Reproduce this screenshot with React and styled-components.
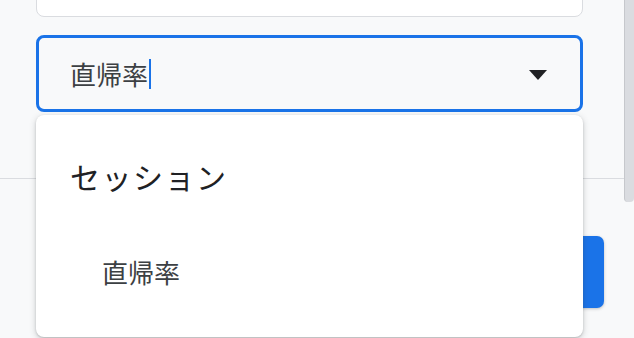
import React from "react";
import styled, { createGlobalStyle } from "styled-components";

const Global = createGlobalStyle`
  html, body { margin: 0; padding: 0; }
  body {
    background: #f8f9fa;
    font-family: "Noto Sans CJK JP", "Noto Sans", sans-serif;
    overflow: hidden;
  }
`;

const Screen = styled.div`
  display: flex;
  width: 634px;
  height: 338px;
  overflow: hidden;
  background: #f8f9fa;
`;

const Main = styled.div`
  position: relative;
  flex: 1;
  display: flex;
  flex-direction: column;
`;

const Scrollbar = styled.div`
  width: 10px;
  display: flex;
  flex-direction: column;
`;

const Thumb = styled.div`
  height: 202px;
  background: #dadce0;
  border-left: 1px solid #c6c8cc;
  border-radius: 0 0 4px 4px;
`;

const FormArea = styled.div`
  display: flex;
  flex-direction: column;
  padding: 0 41px 0 36px;
`;

const Card = styled.div`
  height: 57px;
  margin-top: -40px;
  background: #ffffff;
  border: 1px solid #dadce0;
  border-radius: 8px;
  box-sizing: border-box;
`;

const Field = styled.div`
  margin-top: 18px;
  height: 77px;
  box-sizing: border-box;
  border: 3px solid #1a73e8;
  border-radius: 8px;
  background: #f8f9fa;
  display: flex;
  align-items: center;
  padding: 0 33px 0 31px;
`;

const FieldValue = styled.span`
  font-size: 26px;
  color: #3c4043;
  line-height: 1;
  display: flex;
  align-items: center;
`;

const Caret = styled.span`
  display: inline-block;
  width: 2px;
  height: 30px;
  margin-left: 1px;
  background: #1a73e8;
`;

const Spacer = styled.div`
  flex: 1;
`;

const Arrow = styled.span`
  width: 0;
  height: 0;
  border-left: 9.5px solid transparent;
  border-right: 9.5px solid transparent;
  border-top: 10px solid #202124;
  margin-top: 2px;
`;

const Divider = styled.div`
  margin-top: 66px;
  height: 1px;
  background: #dadce0;
`;

const Footer = styled.div`
  display: flex;
  justify-content: flex-end;
  padding: 57px 20px 0 0;
`;

const PrimaryButton = styled.button`
  width: 120px;
  height: 72px;
  border: none;
  border-radius: 7px;
  background: #1a73e8;
  box-shadow: 0 1px 3px rgba(60, 64, 67, 0.3);
`;

const Menu = styled.div`
  position: absolute;
  top: 115px;
  left: 36px;
  width: 547px;
  height: 222px;
  background: #ffffff;
  border-radius: 8px;
  box-shadow: 0 2px 6px rgba(60, 64, 67, 0.25), 0 1px 2px rgba(60, 64, 67, 0.2);
  padding-top: 13px;
  box-sizing: border-box;
`;

const GroupLabel = styled.div`
  height: 96px;
  line-height: 96px;
  padding-left: ${(p) => p.$indent}px;
  font-size: ${(p) => p.$size}px;
  color: ${(p) => p.$color};
  letter-spacing: ${(p) => p.$spacing || 0}px;
`;

export default function App() {
  return (
    <>
      <Global />
      <Screen>
        <Main>
          <FormArea>
            <Card />
            <Field>
              <FieldValue>
                直帰率
                <Caret />
              </FieldValue>
              <Spacer />
              <Arrow />
            </Field>
          </FormArea>
          <Divider />
          <Footer>
            <PrimaryButton />
          </Footer>
          <Menu>
            <GroupLabel $indent={34} $size={30} $color="#202124" $spacing={1.5}>
              セッション
            </GroupLabel>
            <GroupLabel $indent={66} $size={26} $color="#3c4043">
              直帰率
            </GroupLabel>
          </Menu>
        </Main>
        <Scrollbar>
          <Thumb />
        </Scrollbar>
      </Screen>
    </>
  );
}
